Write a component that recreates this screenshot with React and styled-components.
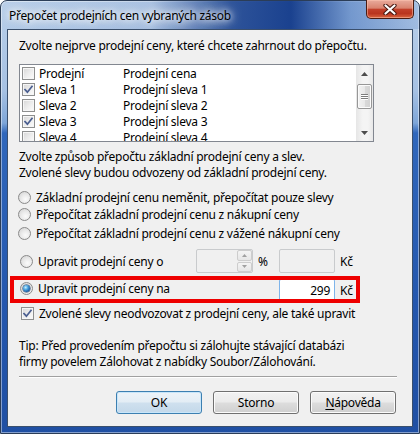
import React from 'react';
import styled, { createGlobalStyle } from 'styled-components';

const Global = createGlobalStyle`
  html, body { margin: 0; padding: 0; background: #ffffff; }
  body { width: 420px; height: 434px; overflow: hidden; }
  * { box-sizing: border-box; }
`;

const FONT = '"Noto Sans", "Open Sans", sans-serif';

const Window = styled.div`
  width: 420px;
  height: 434px;
  display: flex;
  flex-direction: column;
  padding: 0 6px 6px 6px;
  border: 1px solid #2b3d57;
  border-radius: 7px 7px 0 0;
  background: linear-gradient(180deg, #b9cfe9 0px, #a6c1e3 90px, #7ea6d8 122px, #3067bb 132px, #2457ae 300px, #1f4fa3 434px);
  font-family: ${FONT};
  font-size: 12px;
  color: #000;
  box-shadow: inset 0 0 0 1px rgba(255, 255, 255, 0.45);
`;

const TitleBar = styled.div`
  height: 28px;
  display: flex;
  align-items: flex-start;
  justify-content: space-between;
  margin: 0 -6px;
  padding: 0 5px 0 8px;
  background: linear-gradient(90deg, rgba(40, 80, 160, 0) 0px, rgba(40, 80, 160, 0.1) 150px, rgba(22, 62, 140, 0.85) 230px, rgba(18, 58, 138, 0.95) 290px, rgba(50, 100, 180, 0.5) 350px, rgba(60, 110, 190, 0.15) 420px);
  border-radius: 6px 6px 0 0;
`;

const Title = styled.span`
  margin-top: 6px;
  font-size: 12px;
  letter-spacing: -0.3px;
  white-space: nowrap;
  text-shadow: 0 0 6px #fff, 0 0 10px #fff, 0 0 14px rgba(255, 255, 255, 0.9);
`;

const CloseBtn = styled.div`
  width: 48px;
  height: 19px;
  margin-top: -1px;
  border: 1px solid #4a1c12;
  border-top: none;
  border-radius: 0 0 5px 5px;
  background: linear-gradient(180deg, #e9ab9c 0%, #d9836f 45%, #c2402a 52%, #b9351f 75%, #d9653f 100%);
  box-shadow: inset 0 0 0 1px rgba(255, 200, 180, 0.5);
  display: flex;
  align-items: center;
  justify-content: center;
`;

const Client = styled.div`
  flex: 1;
  display: flex;
  flex-direction: column;
  background: #f0f0f0;
  border: 1px solid #3a4f6c;
  padding: 8px 15px 0 11px;
`;

const Text = styled.div`
  line-height: 16px;
  white-space: nowrap;
  letter-spacing: -0.25px;
  margin-top: ${p => p.$mt || 0}px;
`;

const ListBox = styled.div`
  margin-top: 10px;
  width: 355px;
  height: 78px;
  border: 1px solid #828790;
  background: #fff;
  display: flex;
  overflow: hidden;
`;

const ListRows = styled.div`
  flex: 1;
  padding: 0 0 0 2px;
`;

const ListRow = styled.div`
  height: 16px;
  display: grid;
  grid-template-columns: 17px 84px 1fr;
  align-items: center;
  white-space: nowrap;
  letter-spacing: -0.25px;
`;

const ScrollBar = styled.div`
  width: 17px;
  display: flex;
  flex-direction: column;
  align-items: center;
  background: linear-gradient(90deg, #e6e6e6, #f4f4f4 40%, #f4f4f4 70%, #e8e8e8);
`;

const ScrollArrow = styled.div`
  width: 17px;
  height: 17px;
  display: flex;
  align-items: center;
  justify-content: center;
`;

const ScrollThumb = styled.div`
  margin-top: 2px;
  width: 15px;
  height: 25px;
  border: 1px solid #979797;
  border-radius: 2px;
  background: linear-gradient(90deg, #f3f3f3, #e8e8e8 50%, #d9d9d9 51%, #d2d2d2);
  box-shadow: inset 0 0 0 1px #fbfbfb;
  display: flex;
  flex-direction: column;
  align-items: center;
  justify-content: center;
  gap: 1px;
`;

const Grip = styled.span`
  width: 7px;
  height: 1px;
  background: #7c7c7c;
  box-shadow: 0 1px 0 #fff;
`;

const ScrollTrack = styled.div`
  flex: 1;
`;

const CheckBoxSq = styled.span`
  width: 13px;
  height: 13px;
  flex: none;
  border: 1px solid #8e8f8f;
  background: linear-gradient(135deg, #d6d6d6 0%, #ececec 50%, #fdfdfd 100%);
  box-shadow: inset 0 0 0 1px #f6f6f6;
  display: inline-flex;
  align-items: center;
  justify-content: center;
`;

const RadioDot = styled.span`
  width: 13px;
  height: 13px;
  flex: none;
  border-radius: 50%;
  border: 1px solid #8a8a8a;
  background: radial-gradient(circle at 60% 65%, #fbfbfb 0%, #eaeaea 45%, #cfcfcf 100%);
  display: inline-flex;
  align-items: center;
  justify-content: center;
  &::after {
    content: '';
    display: ${p => (p.$on ? 'block' : 'none')};
    width: 7px;
    height: 7px;
    border-radius: 50%;
    background: radial-gradient(circle at 38% 35%, #c8f0ff 0%, #4ea6e0 35%, #1b5ea6 70%, #0d3b73 100%);
    box-shadow: 0 0 0 0.5px #1d3d66;
  }
`;

const OptionRow = styled.label`
  display: flex;
  align-items: center;
  gap: 5px;
  height: 16px;
  white-space: nowrap;
  letter-spacing: -0.25px;
  margin-top: ${p => p.$mt || 0}px;
  margin-left: ${p => p.$ml || 0}px;
`;

const AdjustRow = styled.div`
  position: relative;
  display: grid;
  grid-template-columns: 177px 57px 26px 56px auto;
  align-items: center;
  height: ${p => p.$h}px;
  margin-top: ${p => p.$mt || 0}px;
`;

const RedMark = styled.div`
  position: absolute;
  left: -9px;
  top: -3px;
  right: 37px;
  bottom: -2px;
  border: 4px solid #ee0000;
  pointer-events: none;
`;

const AdjLabel = styled.label`
  display: flex;
  align-items: center;
  gap: 5px;
  padding-left: 1px;
  white-space: nowrap;
  letter-spacing: -0.25px;
  margin-bottom: ${p => p.$mb || 0}px;
`;

const SpinBox = styled.div`
  height: 24px;
  border: 1px solid #c9cbcd;
  border-radius: 2px;
  background: #f0f0f0;
  display: flex;
  justify-content: flex-end;
`;

const SpinBtns = styled.div`
  width: 15px;
  display: flex;
  flex-direction: column;
  gap: 1px;
  padding: 0;
`;

const SpinBtn = styled.div`
  flex: 1;
  border: 1px solid #cdcdcd;
  border-radius: 2px;
  background: linear-gradient(#f4f4f4, #e6e6e6);
  display: flex;
  align-items: center;
  justify-content: center;
`;

const Unit = styled.span`
  padding-left: 5px;
  letter-spacing: -0.25px;
`;

const Field = styled.div`
  height: ${p => p.$h}px;
  border: 1px solid ${p => (p.$active ? '#7eb4ea' : '#c9cbcd')};
  border-top-color: ${p => (p.$active ? '#5793cf' : '#c9cbcd')};
  border-radius: 2px;
  background: ${p => (p.$active ? '#ffffff' : '#f0f0f0')};
  display: flex;
  align-items: center;
  justify-content: flex-end;
  padding-right: 4px;
  letter-spacing: -0.25px;
`;

const Separator = styled.div`
  margin-top: 6px;
  height: 1px;
  background: #a0a0a0;
  box-shadow: 0 1px 0 #ffffff;
`;

const ButtonRow = styled.div`
  margin-top: 14px;
  display: flex;
  justify-content: flex-end;
  gap: 11px;
  padding-right: 1px;
`;

const Button = styled.button`
  width: 86px;
  height: 23px;
  padding: 0;
  font-family: ${FONT};
  font-size: 12px;
  color: #000;
  letter-spacing: -0.25px;
  border: 1px solid ${p => (p.$default ? '#3c7fb1' : '#707070')};
  border-radius: 3px;
  background: ${p =>
    p.$default
      ? 'linear-gradient(#edf3f8 0%, #e3edf5 48%, #cfe0ee 52%, #c3d8ea 100%)'
      : 'linear-gradient(#f2f2f2 0%, #ebebeb 48%, #dddddd 52%, #cfcfcf 100%)'};
  box-shadow: inset 0 0 0 1px ${p => (p.$default ? '#c8e6fa' : '#fbfbfb')};
  u { text-decoration: underline; text-underline-offset: 2px; }
`;

const Check = () => (
  <svg width="11" height="11" viewBox="0 0 11 11">
    <path d="M2 5.6 L4.4 8.2 L9 2.4" fill="none" stroke="#4a5e90" strokeWidth="1.7" strokeLinecap="square" />
  </svg>
);

const CheckBox = ({ on }) => <CheckBoxSq>{on ? <Check /> : null}</CheckBoxSq>;

const Tri = ({ up, color = '#4d4d4d', w = 7, h = 4 }) => (
  <svg width={w} height={h} viewBox={`0 0 ${w} ${h}`}>
    <path d={up ? `M0 ${h} L${w / 2} 0 L${w} ${h} Z` : `M0 0 L${w / 2} ${h} L${w} 0 Z`} fill={color} />
  </svg>
);

const rows = [
  ['Prodejní', 'Prodejní cena', false],
  ['Sleva 1', 'Prodejní sleva 1', true],
  ['Sleva 2', 'Prodejní sleva 2', false],
  ['Sleva 3', 'Prodejní sleva 3', true],
  ['Sleva 4', 'Prodejní sleva 4', false],
];

export default function App() {
  return (
    <>
      <Global />
      <Window>
        <TitleBar>
          <Title>Přepočet prodejních cen vybraných zásob</Title>
          <CloseBtn>
            <svg width="14" height="11" viewBox="0 0 14 11">
              <path d="M2.5 1.5 L11.5 9.5 M11.5 1.5 L2.5 9.5" stroke="#47170f" strokeWidth="4.2" strokeLinecap="round" fill="none" />
              <path d="M2.5 1.5 L11.5 9.5 M11.5 1.5 L2.5 9.5" stroke="#ffffff" strokeWidth="2.2" strokeLinecap="round" fill="none" />
            </svg>
          </CloseBtn>
        </TitleBar>
        <Client>
          <Text>Zvolte nejprve prodejní ceny, které chcete zahrnout do přepočtu.</Text>
          <ListBox>
            <ListRows>
              {rows.map(([a, b, on]) => (
                <ListRow key={a}>
                  <CheckBox on={on} />
                  <span>{a}</span>
                  <span>{b}</span>
                </ListRow>
              ))}
            </ListRows>
            <ScrollBar>
              <ScrollArrow><Tri up /></ScrollArrow>
              <ScrollThumb>
                <Grip />
                <Grip />
                <Grip />
              </ScrollThumb>
              <ScrollTrack />
              <ScrollArrow><Tri /></ScrollArrow>
            </ScrollBar>
          </ListBox>
          <Text $mt={7}>Zvolte způsob přepočtu základní prodejní ceny a slev.</Text>
          <Text>Zvolené slevy budou odvozeny od základní prodejní ceny.</Text>
          <OptionRow $mt={8} $ml={-1}>
            <RadioDot />
            <span>Základní prodejní cenu neměnit, přepočítat pouze slevy</span>
          </OptionRow>
          <OptionRow $mt={1} $ml={-1}>
            <RadioDot />
            <span>Přepočítat základní prodejní cenu z nákupní ceny</span>
          </OptionRow>
          <OptionRow $mt={3} $ml={-1}>
            <RadioDot />
            <span>Přepočítat základní prodejní cenu z vážené nákupní ceny</span>
          </OptionRow>
          <AdjustRow $h={24} $mt={8}>
            <AdjLabel>
              <RadioDot />
              <span>Upravit prodejní ceny o</span>
            </AdjLabel>
            <SpinBox>
              <SpinBtns>
                <SpinBtn><Tri up color="#a0a0a0" w={5} h={3} /></SpinBtn>
                <SpinBtn><Tri color="#a0a0a0" w={5} h={3} /></SpinBtn>
              </SpinBtns>
            </SpinBox>
            <Unit>%</Unit>
            <Field $h={24} />
            <Unit>Kč</Unit>
          </AdjustRow>
          <AdjustRow $h={22} $mt={6}>
            <RedMark />
            <AdjLabel $mb={4}>
              <RadioDot $on />
              <span>Upravit prodejní ceny na</span>
            </AdjLabel>
            <span />
            <span />
            <Field $h={22} $active>299</Field>
            <Unit>Kč</Unit>
          </AdjustRow>
          <OptionRow $mt={4} $ml={2}>
            <CheckBox on />
            <span>Zvolené slevy neodvozovat z prodejní ceny, ale také upravit</span>
          </OptionRow>
          <Text $mt={17}>Tip: Před provedením přepočtu si zálohujte stávající databázi</Text>
          <Text>firmy povelem Zálohovat z nabídky Soubor/Zálohování.</Text>
          <Separator />
          <ButtonRow>
            <Button $default>OK</Button>
            <Button>Storno</Button>
            <Button><u>N</u>ápověda</Button>
          </ButtonRow>
        </Client>
      </Window>
    </>
  );
}
